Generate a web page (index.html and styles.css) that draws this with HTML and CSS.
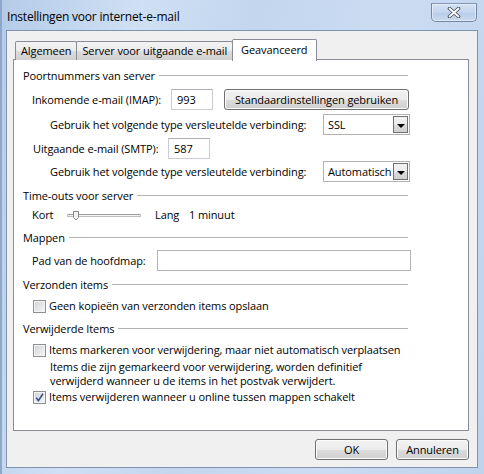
FILE: index.html
```html
<!DOCTYPE html>
<html lang="nl">
<head>
  <meta charset="UTF-8" />
  <title>Instellingen voor internet-e-mail</title>
  <link rel="stylesheet" href="styles.css">
</head>
<body>

  <div class="titlebar">
    <span class="title">Instellingen voor internet-e-mail</span>
    <button class="close">
      <svg width="14" height="11" viewBox="0 0 14 11">
        <path d="M2.5 1.5 L11.5 9.5 M11.5 1.5 L2.5 9.5" stroke="#45505e" stroke-width="3.6" stroke-linecap="round"/>
        <path d="M2.5 1.5 L11.5 9.5 M11.5 1.5 L2.5 9.5" stroke="#fff" stroke-width="1.8" stroke-linecap="round"/>
      </svg>
    </button>
  </div>

  <div class="client">
    <div class="tabs">
      <div class="tab">Algemeen</div>
      <div class="tab">Server voor uitgaande e-mail</div>
      <div class="tab active">Geavanceerd</div>
    </div>

    <div class="panel">
      <div class="group-title first">Poortnummers van server</div>
      <div class="row port-row">
        <span class="label imap-label">Inkomende e-mail (IMAP):</span>
        <span class="textbox port">993</span>
        <button class="btn defaults">Standaardinstellingen gebruiken</button>
      </div>
      <div class="row enc-row">
        <span class="label enc-label">Gebruik het volgende type versleutelde verbinding:</span>
        <span class="combo"><span class="combo-value">SSL</span><span class="combo-arrow"></span></span>
      </div>
      <div class="row port-row smtp">
        <span class="label smtp-label">Uitgaande e-mail (SMTP):</span>
        <span class="textbox port">587</span>
      </div>
      <div class="row enc-row second">
        <span class="label enc-label">Gebruik het volgende type versleutelde verbinding:</span>
        <span class="combo"><span class="combo-value">Automatisch</span><span class="combo-arrow"></span></span>
      </div>

      <div class="group-title">Time-outs voor server</div>
      <div class="row timeout-row">
        <span class="kort">Kort</span>
        <span class="slider">
          <svg width="80" height="14" viewBox="0 0 80 14">
            <rect x="1.5" y="6.5" width="73" height="2" fill="#f4f4f4" stroke="#bdbdbd"/>
            <line x1="2" y1="6.5" x2="74" y2="6.5" stroke="#9d9d9d"/>
            <path d="M7.5 3.5 H12.5 V9.5 L10 12 L7.5 9.5 Z" fill="#f2f2f2" stroke="#8b8b8b"/>
          </svg>
        </span>
        <span class="lang">Lang</span>
        <span>1 minuut</span>
      </div>

      <div class="group-title">Mappen</div>
      <div class="row path-row">
        <span class="label path-label">Pad van de hoofdmap:</span>
        <span class="textbox path"></span>
      </div>

      <div class="group-title">Verzonden items</div>
      <div class="row check-row">
        <span class="checkbox"></span>
        <span>Geen kopieën van verzonden items opslaan</span>
      </div>

      <div class="group-title">Verwijderde Items</div>
      <div class="row check-row">
        <span class="checkbox"></span>
        <span>Items markeren voor verwijdering, maar niet automatisch verplaatsen</span>
      </div>
      <div class="note">
        <span>Items die zijn gemarkeerd voor verwijdering, worden definitief</span>
        <span>verwijderd wanneer u de items in het postvak verwijdert.</span>
      </div>
      <div class="row check-row last">
        <span class="checkbox">
          <svg width="11" height="11" viewBox="0 0 11 11">
            <path d="M2.2 5.6 L4.4 8.6 L9 1.8" fill="none" stroke="#3b4f86" stroke-width="1.6"/>
          </svg>
        </span>
        <span>Items verwijderen wanneer u online tussen mappen schakelt</span>
      </div>
    </div>

    <div class="actions">
      <button class="btn">OK</button>
      <button class="btn">Annuleren</button>
    </div>
  </div>

</body>
</html>
```

FILE: styles.css
```css
body {
  margin: 0;
  width: 484px;
  height: 474px;
  overflow: hidden;
  font-family: "Open Sans", "Noto Sans", sans-serif;
  font-size: 11px;
  line-height: 16px;
  letter-spacing: -0.1px;
  color: #000;
  background: linear-gradient(100deg, #b4cbe8 0%, #cfe0f4 25%, #c3d6ee 45%, #cbdcf2 70%, #bfd3ed 100%);
  box-shadow: inset 2px 0 0 #8ea8cc;
}

/* title bar */
.titlebar {
  height: 30px;
  display: flex;
  justify-content: space-between;
  align-items: flex-start;
  padding: 0 7px 0 7px;
}

.title {
  margin-top: 9px;
  font-size: 12px;
  letter-spacing: -0.2px;
}

.close {
  width: 46px;
  height: 19px;
  margin-top: 3px;
  padding: 0;
  border: 1px solid #7387a4;
  border-top-color: #8397b3;
  border-radius: 0 0 5px 5px;
  background: linear-gradient(#d4e2f4, #c3d5ee 50%, #b8cce8 51%, #c9dbf1);
  box-shadow: inset 0 0 0 1px rgba(255,255,255,0.45);
  display: flex;
  align-items: center;
  justify-content: center;
}

/* client area */
.client {
  margin-left: 6px;
  width: 470px;
  height: 436px;
  box-sizing: content-box;
  border: 1px solid #8294ad;
  background: #f0f0f0;
  padding: 0;
}

.tabs {
  display: flex;
  align-items: flex-end;
  height: 21px;
  margin: 8px 0 0 8px;
  position: relative;
  z-index: 1;
}

.tab {
  height: 18px;
  line-height: 18px;
  padding: 0 5px;
  border: 1px solid #898c95;
  border-bottom: none;
  margin-right: -1px;
  background: linear-gradient(#f3f3f3, #ebebeb 50%, #dddddd 51%, #cfcfcf);
  border-radius: 2px 2px 0 0;
}

.tab.active {
  height: 21px;
  line-height: 19px;
  padding: 0 8px;
  margin-left: 0;
  margin-bottom: -1px;
  background: #fff;
}

.panel {
  margin: -1px 0 0 6px;
  width: 456px;
  height: 372px;
  box-sizing: border-box;
  border: 1px solid #898c95;
  background: #fff;
  padding-left: 9px;
}

.group-title {
  display: flex;
  align-items: center;
  width: 385px;
  height: 16px;
  margin-top: 6px;
}

.group-title::after {
  content: "";
  flex: 1;
  margin: -2px 0 0 4px;
  border-top: 1px solid #b4b4b4;
}

.group-title.first {
  margin-top: 8px;
}

.row {
  display: flex;
  align-items: center;
  height: 21px;
}

.label {
  flex: none;
}

.port-row {
  margin: 5px 0 0 9px;
}

.port-row.smtp {
  margin: 3px 0 0 10px;
}

.imap-label { width: 139px; }
.smtp-label { width: 135px; }
.enc-label { width: 273px; }
.path-label { width: 125px; }

.textbox {
  box-sizing: border-box;
  height: 21px;
  line-height: 19px;
  border: 1px solid #c9ccd2;
  border-top-color: #abadb3;
  background: #fff;
}

.textbox.port {
  width: 42px;
  padding-left: 5px;
}

.textbox.path {
  width: 254px;
  border-color: #b4b4b4;
}

.btn {
  box-sizing: border-box;
  height: 21px;
  padding: 0;
  font-family: inherit;
  font-size: 11px;
  letter-spacing: -0.1px;
  color: #000;
  border: 1px solid #707070;
  border-radius: 3px;
  background: linear-gradient(#f2f2f2, #ebebeb 50%, #dddddd 51%, #cfcfcf);
  box-shadow: inset 0 0 0 1px #fbfbfb;
}

.btn.defaults {
  width: 185px;
  margin-left: 11px;
}

.enc-row {
  margin: 4px 0 0 27px;
}

.enc-row.second {
  margin-top: 2px;
}

.combo {
  box-sizing: border-box;
  width: 87px;
  height: 21px;
  display: flex;
  align-items: center;
  border: 1px solid #b2b2b2;
  background: #fff;
  padding: 1px;
}

.combo-value {
  flex: 1;
  overflow: hidden;
  white-space: nowrap;
  padding-left: 3px;
}

.combo-arrow {
  flex: none;
  width: 15px;
  height: 17px;
  box-sizing: border-box;
  border: 1px solid #707070;
  background: linear-gradient(#f2f2f2, #ebebeb 50%, #dddddd 51%, #cfcfcf);
  display: flex;
  align-items: center;
  justify-content: center;
}

.combo-arrow::after {
  content: "";
  margin-top: 2px;
  border-left: 4px solid transparent;
  border-right: 4px solid transparent;
  border-top: 4px solid #000;
}

.timeout-row {
  height: 18px;
  margin: 2px 0 0 9px;
}

.kort { width: 34px; }
.slider { width: 89px; height: 14px; }
.lang { width: 34px; }

.path-row {
  margin: 4px 0 0 9px;
}

.check-row {
  height: 18px;
  margin: 4px 0 0 10px;
}

.check-row.last {
  margin-top: 0;
}

.checkbox {
  box-sizing: border-box;
  width: 13px;
  height: 13px;
  margin-right: 3px;
  border: 1px solid #8e8f8f;
  background: linear-gradient(135deg, #cfd2d7, #f7f7f7);
  box-shadow: inset 0 0 0 1px #f4f4f4;
  display: flex;
  align-items: center;
  justify-content: center;
}

.note {
  margin: 1px 0 0 27px;
}

.note span {
  display: block;
  height: 14px;
  line-height: 14px;
}

.actions {
  display: flex;
  justify-content: flex-end;
  gap: 8px;
  margin: 8px 8px 0 0;
}

.actions .btn {
  width: 73px;
}
```
